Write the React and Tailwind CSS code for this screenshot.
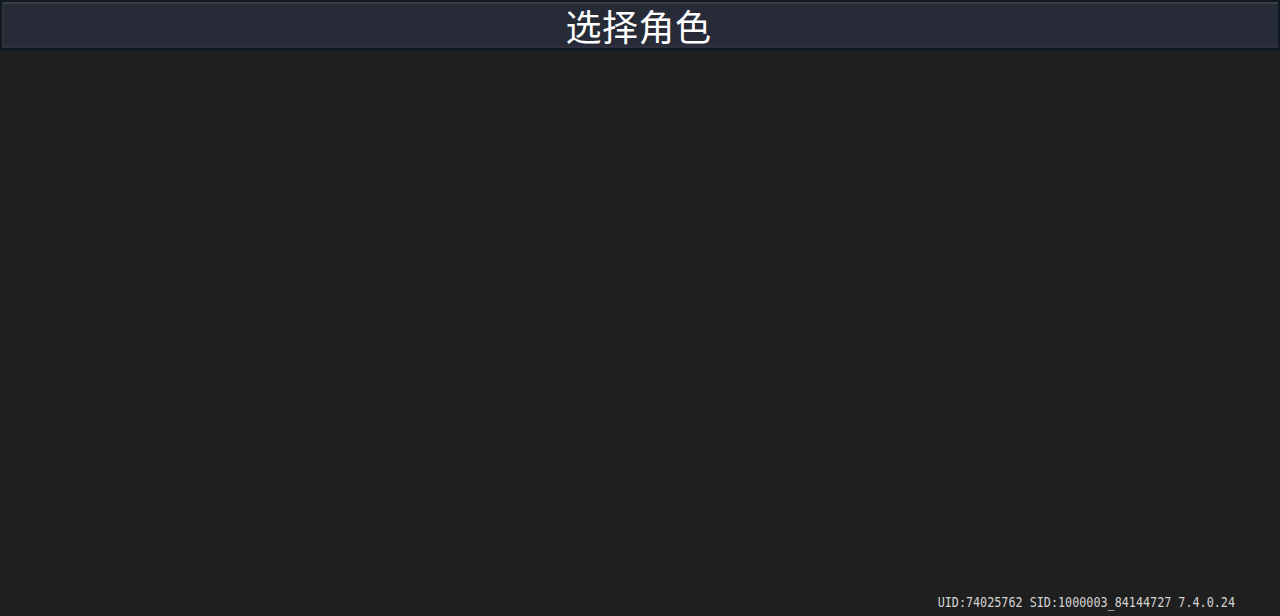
export default function App() {
  return (
    <div className="w-[1280px] h-[616px] bg-[#1f1f1f] flex flex-col overflow-hidden">
      <div className="h-[51px] bg-[#0f1a1e] p-[2px] pb-[3px]">
        <div className="h-full bg-[#272a37] border-t-2 border-t-[#3a3d48] border-b-[3px] border-b-[#2d303c] border-l border-l-[#33363f] flex items-center justify-center">
          <span
            className="text-white text-[36px] leading-none tracking-[0.5px] -ml-[4px]"
            style={{ fontFamily: '"Noto Sans CJK SC", sans-serif' }}
          >
            选择角色
          </span>
        </div>
      </div>
      <div className="flex-1 flex flex-col justify-end items-end pr-[45px] pb-[7px]">
        <span
          className="text-[#d4d4d4] text-[14px] leading-none scale-x-[0.84] origin-right whitespace-nowrap"
          style={{ fontFamily: '"DejaVu Sans Mono", monospace' }}
        >
          UID:74025762 SID:1000003_84144727 7.4.0.24
        </span>
      </div>
    </div>
  );
}
